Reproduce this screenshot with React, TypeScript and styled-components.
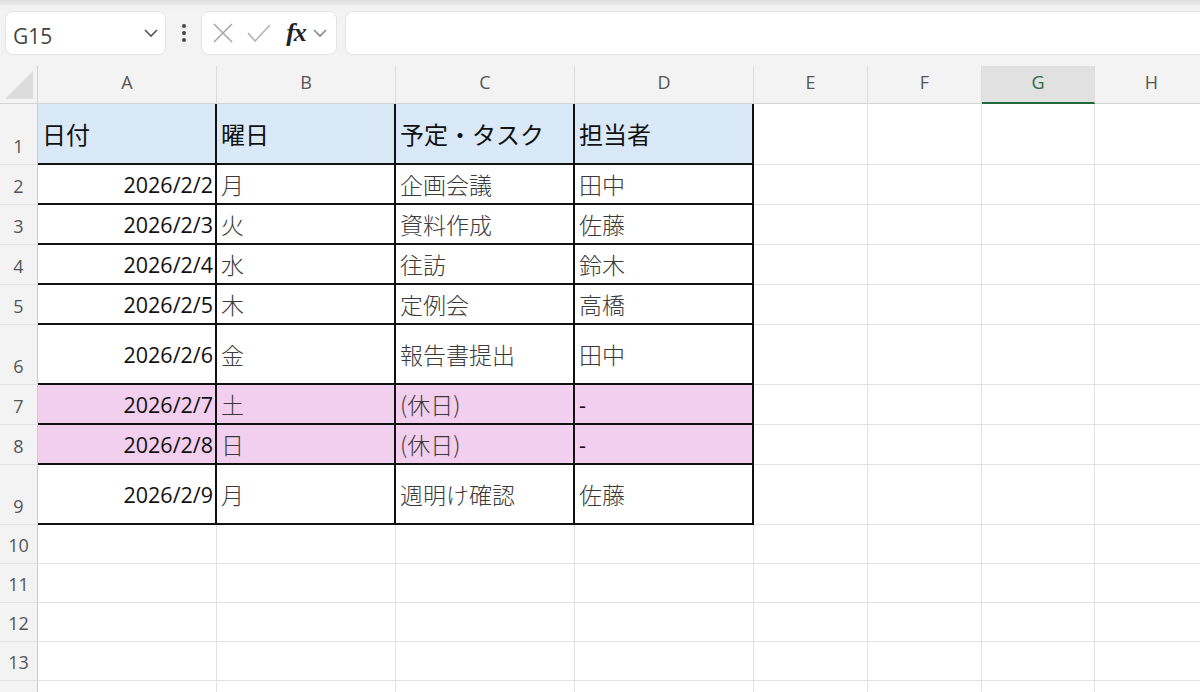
import React from "react";
import styled, { createGlobalStyle } from "styled-components";

const GlobalStyle = createGlobalStyle`
  html, body {
    margin: 0;
    padding: 0;
    background: #ffffff;
  }
  * {
    box-sizing: border-box;
  }
`;

const COLS = [38, 179, 179, 179, 179, 114, 114, 113, 114];
const LETTERS = ["A", "B", "C", "D", "E", "F", "G", "H"];
const SELECTED_COL = "G";

type DataRow = {
  height: number;
  date: string;
  day: string;
  task: string;
  who: string;
  holiday?: boolean;
};

const rows: DataRow[] = [
  { height: 40, date: "2026/2/2", day: "月", task: "企画会議", who: "田中" },
  { height: 40, date: "2026/2/3", day: "火", task: "資料作成", who: "佐藤" },
  { height: 40, date: "2026/2/4", day: "水", task: "往訪", who: "鈴木" },
  { height: 40, date: "2026/2/5", day: "木", task: "定例会", who: "高橋" },
  { height: 60, date: "2026/2/6", day: "金", task: "報告書提出", who: "田中" },
  { height: 40, date: "2026/2/7", day: "土", task: "(休日)", who: "-", holiday: true },
  { height: 40, date: "2026/2/8", day: "日", task: "(休日)", who: "-", holiday: true },
  { height: 60, date: "2026/2/9", day: "月", task: "週明け確認", who: "佐藤" },
];

// rows 10-13 are labelled, the last one only peeks in at the bottom edge
const emptyRows = [39, 39, 39, 39, 39];
const LAST_LABELLED = 13;

const Page = styled.div`
  width: 1200px;
  height: 692px;
  overflow: hidden;
  background: #ffffff;
  font-family: "Open Sans", "Noto Sans CJK JP", sans-serif;
`;

const Toolbar = styled.div`
  height: 66px;
  display: flex;
  align-items: flex-start;
  padding: 11px 0 0 5px;
  background: linear-gradient(#dcdcdc 0px, #f1f1f1 6px, #f3f3f3 12px);
`;

const Field = styled.div<{ $width?: number; $grow?: boolean }>`
  height: 44px;
  width: ${(p) => (p.$width ? `${p.$width}px` : "auto")};
  flex: ${(p) => (p.$grow ? "1" : "none")};
  background: #ffffff;
  border: 1px solid #e4e4e4;
  border-radius: 8px;
  display: flex;
  align-items: center;
`;

const NameBox = styled(Field)`
  justify-content: space-between;
  padding: 0 6px 0 7px;
`;

const NameText = styled.span`
  font-family: "Open Sans", sans-serif;
  font-size: 21px;
  color: #444444;
  padding-top: 6px;
`;

const Grip = styled.div`
  width: 35px;
  height: 44px;
  display: flex;
  align-items: center;
  justify-content: center;
`;

const Controls = styled(Field)`
  padding: 0 6px 0 6px;
  margin-right: 8px;
`;

const IconSlot = styled.span<{ $w: number }>`
  width: ${(p) => p.$w}px;
  display: flex;
  align-items: center;
  justify-content: center;
`;

const Fx = styled.span`
  font-family: "Liberation Serif", "DejaVu Serif", serif;
  font-style: italic;
  font-weight: 700;
  font-size: 26px;
  color: #222;
  letter-spacing: -1px;
`;

const FormulaInput = styled(Field)`
  border-right: none;
  border-radius: 8px 0 0 8px;
`;

const Sheet = styled.div`
  display: grid;
  grid-template-columns: ${COLS.map((c) => `${c}px`).join(" ")};
`;

const Corner = styled.div`
  height: 38px;
  background: #f3f3f3;
  border-right: 1px solid #d4d4d4;
  border-bottom: 1px solid #d4d4d4;
  display: flex;
  align-items: flex-end;
  padding: 0 0 4px 5px;
`;

const ColHead = styled.div<{ $selected: boolean }>`
  height: 38px;
  display: flex;
  align-items: center;
  justify-content: center;
  padding-bottom: 5px;
  font-size: 18px;
  color: ${(p) => (p.$selected ? "#2f6b47" : "#555555")};
  background: ${(p) => (p.$selected ? "#e1e1e1" : "#f3f3f3")};
  border-right: 1px solid #dcdcdc;
  border-bottom: ${(p) => (p.$selected ? "2px solid #1f6b3c" : "1px solid #d4d4d4")};
`;

const RowHead = styled.div<{ $h: number }>`
  height: ${(p) => p.$h}px;
  background: #f3f3f3;
  border-right: 1px solid #cdcdcd;
  border-bottom: 1px solid #e2e2e2;
  display: flex;
  align-items: flex-end;
  justify-content: center;
  padding-bottom: 6px;
  font-size: 18px;
  line-height: 24px;
  color: #555555;
`;

const Cell = styled.div<{
  $h: number;
  $fill?: string;
  $boxed?: boolean;
  $right?: boolean;
}>`
  height: ${(p) => p.$h}px;
  background: ${(p) => p.$fill || "#ffffff"};
  border-right: ${(p) => (p.$boxed ? "2px solid #111" : "1px solid #e2e2e2")};
  border-bottom: ${(p) => (p.$boxed ? "2px solid #111" : "1px solid #e2e2e2")};
  display: flex;
  align-items: center;
  justify-content: ${(p) => (p.$right ? "flex-end" : "flex-start")};
  padding: 0 2px 0 4px;
  white-space: nowrap;
  overflow: hidden;
`;

const DateText = styled.span`
  font-family: "Open Sans", sans-serif;
  font-size: 21.5px;
  color: #111111;
`;

const JpText = styled.span<{ $head?: boolean }>`
  font-family: "Noto Sans CJK JP", sans-serif;
  font-size: ${(p) => (p.$head ? "24px" : "23px")};
  font-weight: ${(p) => (p.$head ? 400 : 300)};
  color: ${(p) => (p.$head ? "#111111" : "#3a3a3a")};
`;

const HEAD_FILL = "#dae9f8";
const HOLIDAY_FILL = "#f2cfee";

const Chevron = ({ color = "#444" }: { color?: string }) => (
  <svg width="16" height="10" viewBox="0 0 16 10">
    <path d="M2 2 L8 8 L14 2" fill="none" stroke={color} strokeWidth="1.6" />
  </svg>
);

const EmptyCells = ({ h, from }: { h: number; from: number }) => (
  <>
    {COLS.slice(from).map((_, i) => (
      <Cell key={i} $h={h} />
    ))}
  </>
);

export default function App() {
  return (
    <Page>
      <GlobalStyle />
      <Toolbar>
        <NameBox $width={161}>
          <NameText>G15</NameText>
          <Chevron color="#555" />
        </NameBox>
        <Grip>
          <svg width="6" height="20" viewBox="0 0 6 20">
            <circle cx="3" cy="3" r="2" fill="#444" />
            <circle cx="3" cy="10" r="2" fill="#444" />
            <circle cx="3" cy="17" r="2" fill="#444" />
          </svg>
        </Grip>
        <Controls $width={136}>
          <IconSlot $w={30}>
            <svg width="22" height="22" viewBox="0 0 22 22">
              <path d="M2 2 L20 20 M20 2 L2 20" stroke="#a8a8a8" strokeWidth="1.6" fill="none" />
            </svg>
          </IconSlot>
          <IconSlot $w={42}>
            <svg width="26" height="22" viewBox="0 0 26 22">
              <path d="M2 11 L9 19 L24 3" stroke="#b4b4b4" strokeWidth="1.6" fill="none" />
            </svg>
          </IconSlot>
          <IconSlot $w={32}>
            <Fx>fx</Fx>
          </IconSlot>
          <IconSlot $w={16}>
            <Chevron color="#888" />
          </IconSlot>
        </Controls>
        <FormulaInput $grow />
      </Toolbar>

      <Sheet>
        <Corner>
          <svg width="28" height="28" viewBox="0 0 28 28">
            <path d="M28 0 L28 28 L0 28 Z" fill="#dcdcdc" />
          </svg>
        </Corner>
        {LETTERS.map((l) => (
          <ColHead key={l} $selected={l === SELECTED_COL}>
            {l}
          </ColHead>
        ))}

        <RowHead $h={61}>1</RowHead>
        {["日付", "曜日", "予定・タスク", "担当者"].map((t) => (
          <Cell key={t} $h={61} $fill={HEAD_FILL} $boxed>
            <JpText $head>{t}</JpText>
          </Cell>
        ))}
        <EmptyCells h={61} from={5} />

        {rows.map((r, i) => {
          const fill = r.holiday ? HOLIDAY_FILL : undefined;
          return (
            <React.Fragment key={r.date}>
              <RowHead $h={r.height}>{i + 2}</RowHead>
              <Cell $h={r.height} $fill={fill} $boxed $right>
                <DateText>{r.date}</DateText>
              </Cell>
              <Cell $h={r.height} $fill={fill} $boxed>
                <JpText>{r.day}</JpText>
              </Cell>
              <Cell $h={r.height} $fill={fill} $boxed>
                <JpText>{r.task}</JpText>
              </Cell>
              <Cell $h={r.height} $fill={fill} $boxed>
                {r.who === "-" ? <DateText>-</DateText> : <JpText>{r.who}</JpText>}
              </Cell>
              <EmptyCells h={r.height} from={5} />
            </React.Fragment>
          );
        })}

        {emptyRows.map((h, i) => (
          <React.Fragment key={i}>
            <RowHead $h={h}>{i + 10 <= LAST_LABELLED ? i + 10 : ""}</RowHead>
            <EmptyCells h={h} from={1} />
          </React.Fragment>
        ))}
      </Sheet>
    </Page>
  );
}
